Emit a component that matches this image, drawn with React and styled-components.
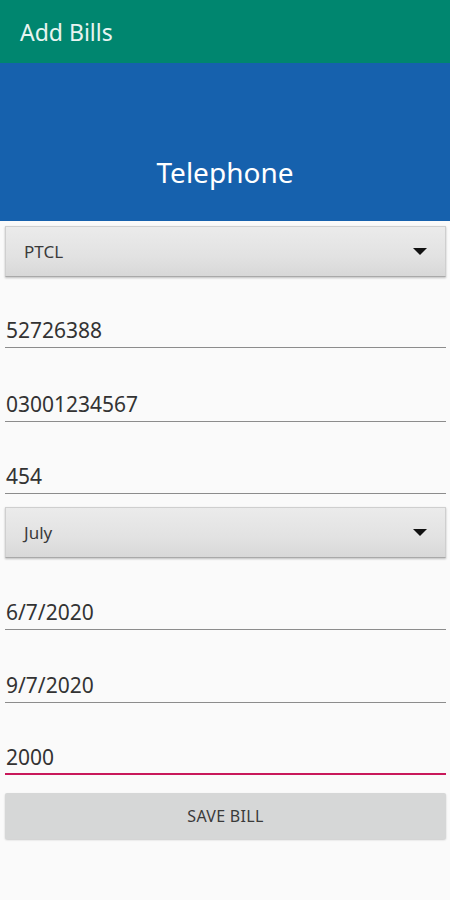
import React from 'react'
import styled, { createGlobalStyle } from 'styled-components'

const GlobalStyle = createGlobalStyle`
  body {
    margin: 0;
    background: #fafafa;
    font-family: 'Noto Sans', 'Open Sans', sans-serif;
  }
`

const Screen = styled.div`
  width: 450px;
  min-height: 900px;
  background: #fafafa;
  display: flex;
  flex-direction: column;
`

const AppBar = styled.div`
  height: 63px;
  background: #00866f;
  color: #e8f4f1;
  display: flex;
  align-items: center;
  padding: 0 20px;
  font-size: 23px;
  box-sizing: border-box;
`

const Banner = styled.div`
  height: 158px;
  background: #1661ad;
  color: #ffffff;
  display: flex;
  align-items: flex-end;
  justify-content: center;
  padding-bottom: 30px;
  box-sizing: border-box;
  font-size: 28px;
`

const Form = styled.div`
  display: flex;
  flex-direction: column;
  padding: 0 4px 0 5px;
`

const Spinner = styled.div`
  margin-top: ${props => props.gap || '5px'};
  height: 51px;
  box-sizing: border-box;
  border: 1px solid #cfcfcf;
  border-bottom-color: #a9a9a9;
  background: linear-gradient(180deg, #ebebeb 0%, #e2e2e2 60%, #d8d8d8 100%);
  box-shadow: 0 1px 2px rgba(0, 0, 0, 0.25);
  display: flex;
  align-items: center;
  justify-content: space-between;
  padding: 0 18px 0 18px;
  font-size: 17px;
  color: #3a3a3a;
`

const Caret = styled.span`
  width: 0;
  height: 0;
  border-left: 7px solid transparent;
  border-right: 7px solid transparent;
  border-top: 7px solid #111;
`

const Field = styled.div`
  margin-top: ${props => props.gap || '23px'};
  height: 50px;
  box-sizing: content-box;
  border-bottom: ${props => (props.focused ? '2px solid #c8185a' : '1.5px solid #8c8c8c')};
  display: flex;
  align-items: flex-end;
`

const FieldText = styled.span`
  font-size: 21px;
  line-height: 26px;
  padding: 0 0 ${props => (props.focused ? '3px' : '4px')} 1px;
  color: #333;
`

const SaveButton = styled.div`
  margin-top: 18px;
  height: 46px;
  background: #d6d7d7;
  border-radius: 2px;
  box-shadow: 0 1px 2px rgba(0, 0, 0, 0.2);
  display: flex;
  align-items: center;
  justify-content: center;
  font-size: 16px;
  letter-spacing: 0.3px;
  color: #3a3a3a;
`

const fieldsA = ['52726388', '03001234567', '454']
const gapsA = ['20px', '23px', '21px']
const fieldsB = ['6/7/2020', '9/7/2020']
const gapsB = ['21px', '22px']

export default function App () {
  return (
    <Screen>
      <GlobalStyle />
      <AppBar>Add Bills</AppBar>
      <Banner>Telephone</Banner>
      <Form>
        <Spinner>
          PTCL
          <Caret />
        </Spinner>
        {fieldsA.map((v, i) => (
          <Field key={v} gap={gapsA[i]}>
            <FieldText>{v}</FieldText>
          </Field>
        ))}
        <Spinner gap="13px">
          July
          <Caret />
        </Spinner>
        {fieldsB.map((v, i) => (
          <Field key={v} gap={gapsB[i]}>
            <FieldText>{v}</FieldText>
          </Field>
        ))}
        <Field focused gap="20px">
          <FieldText focused>2000</FieldText>
        </Field>
        <SaveButton>SAVE BILL</SaveButton>
      </Form>
    </Screen>
  )
}
